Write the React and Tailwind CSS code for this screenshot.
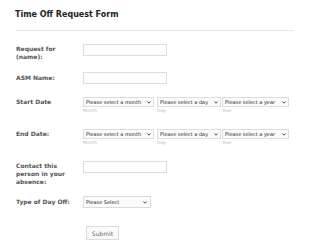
import React from "react";

const font = { fontFamily: '"DejaVu Sans", Verdana, sans-serif' };

function Chevron() {
  return (
    <svg width="4" height="3" viewBox="0 0 4 3" className="shrink-0">
      <path d="M0.4 0.5 L2 2.2 L3.6 0.5" fill="none" stroke="#333" strokeWidth="0.9" />
    </svg>
  );
}

function Select({ text, w }) {
  return (
    <div
      className={`flex items-center justify-between h-[10px] border border-[#dcdcdc] bg-[#fbfbfb] pl-[2px] pr-[2px] ${w}`}
    >
      <span className="text-[5px] leading-[8px] text-[#222] whitespace-nowrap">{text}</span>
      <Chevron />
    </div>
  );
}

function Label({ children, mt = "" }) {
  return (
    <div className={`w-[67px] shrink-0 text-[6px] leading-[8px] font-bold text-[#555] ${mt}`}>
      {children}
    </div>
  );
}

function Sub({ children }) {
  return <span className="text-[4.5px] leading-[6px] text-[#bbb] mt-[1px]">{children}</span>;
}

function DateRow({ label, mt }) {
  return (
    <div className={`flex items-start ${mt}`}>
      <Label mt="mt-[1px]">{label}</Label>
      <div className="flex flex-col">
        <Select text="Please select a month" w="w-[71px]" />
        <Sub>Month</Sub>
      </div>
      <div className="flex flex-col ml-[3px]">
        <Select text="Please select a day" w="w-[64px]" />
        <Sub>Day</Sub>
      </div>
      <div className="flex flex-col ml-[1px]">
        <Select text="Please select a year" w="w-[67px]" />
        <Sub>Year</Sub>
      </div>
    </div>
  );
}

export default function App() {
  return (
    <div className="w-[310px] h-[251px] bg-white overflow-hidden" style={font}>
      <div className="pl-[16px] pr-[16px]">
        <div className="pt-[10px]">
          <h1 className="text-[8px] leading-[10px] font-bold text-[#222] -ml-[1px]">Time Off Request Form</h1>
        </div>
        <div className="mt-[10px] h-px bg-[#e8e8e8] w-[279px] -ml-[1px]" />

        <div className="flex items-start mt-[13px]">
          <Label mt="mt-[1px]">Request for<br />(name):</Label>
          <div className="w-[84px] h-[12px] border border-[#dcdcdc] bg-white" />
        </div>

        <div className="flex items-start mt-[11px]">
          <Label mt="mt-[2px]">ASM Name:</Label>
          <div className="w-[84px] h-[12px] border border-[#dcdcdc] bg-white" />
        </div>

        <DateRow label="Start Date" mt="mt-[13px]" />
        <DateRow label="End Date:" mt="mt-[15px]" />

        <div className="flex items-start mt-[15px]">
          <Label mt="mt-[1px]">Contact this<br />person in your<br />absence:</Label>
          <div className="w-[84px] h-[12px] border border-[#dcdcdc] bg-white" />
        </div>

        <div className="flex items-start mt-[10px]">
          <Label mt="mt-[2px]">Type of Day Off:</Label>
          <div className="flex items-center justify-between w-[68px] h-[12px] border border-[#dcdcdc] bg-[#fbfbfb] pl-[2px] pr-[3px]">
            <span className="text-[5px] leading-[8px] text-[#222]">Please Select</span>
            <Chevron />
          </div>
        </div>

        <div className="mt-[18px] ml-[70px]">
          <div className="w-[33px] h-[14px] border border-[#dcdcdc] bg-[#fafafa] flex items-center justify-center text-[6px] text-[#666]">
            Submit
          </div>
        </div>
      </div>
    </div>
  );
}
